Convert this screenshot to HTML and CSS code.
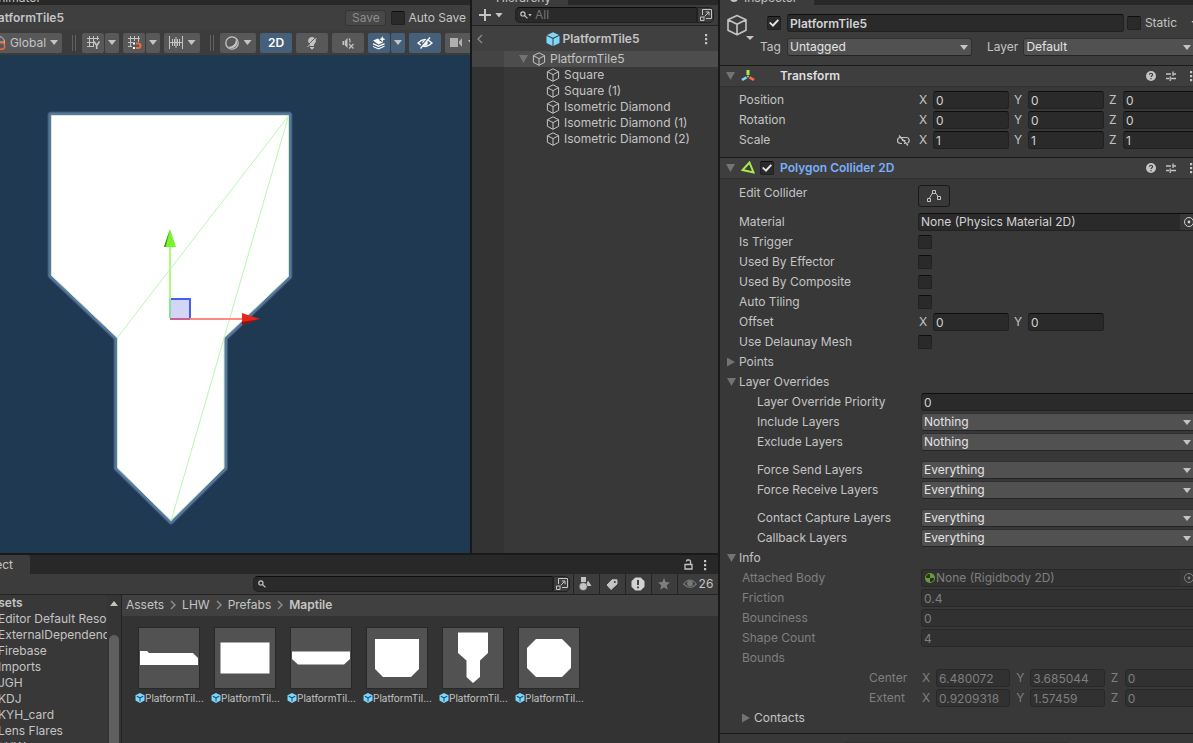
FILE: index.html
```html
<!DOCTYPE html>
<html lang="en">
<head>
<meta charset="utf-8">
<title>PlatformTile5 - Editor</title>
<link rel="stylesheet" href="styles.css">
</head>
<body>
<svg class="defs" aria-hidden="true">
  <symbol id="cube" viewBox="0 0 14 14"><path d="M7 .8 12.6 3.7V10.3L7 13.3 1.4 10.3V3.7ZM1.4 3.7 7 6.6 12.6 3.7M7 6.6V13.3" fill="none" stroke="currentColor" stroke-linejoin="round"/></symbol>
  <symbol id="prefab" viewBox="0 0 14 14"><path d="M7 .2 13 2.9 7 5.8 1 2.9ZM.5 3.8 6.5 6.7V14L.5 11ZM13.5 3.8 7.5 6.7V14L13.5 11Z" fill="#7fd6fd"/></symbol>
  <symbol id="prefab-small" viewBox="0 0 10 10"><path d="M5 0 9.5 2.2V7.6L5 10 .5 7.6V2.2Z" fill="#7fd6fd"/><path d="M1.8 3.2 5 4.8 8.2 3.2M5 4.8V8.6" fill="none" stroke="#23546e" stroke-width="1.1"/></symbol>
  <symbol id="popout" viewBox="0 0 12 12"><path d="M2.5 6V.5H11.5V9.5H6M.5 8H4V11.5H.5ZM4.5 7.5 9 3M5.8 3H9V6.2" fill="none" stroke="currentColor"/></symbol>
  <symbol id="dots" viewBox="0 0 4 12"><path d="M1 1H3.2V3.2H1ZM1 5H3.2V7.2H1ZM1 9H3.2V11.2H1Z" fill="currentColor"/></symbol>
  <symbol id="help" viewBox="0 0 10 10"><circle cx="5" cy="5" r="5" fill="currentColor"/><path d="M3.4 3.8C3.4 1.7 6.6 1.7 6.6 3.8 6.6 4.8 5 4.8 5 6.1M5 7V8.2" fill="none" stroke="#3e3e3e" stroke-width="1.2"/></symbol>
  <symbol id="preset" viewBox="0 0 10 10"><path d="M0 3H5M7 3H10M7 .5V5M0 7.5H3M5 7.5H10M4.2 5.5V10" fill="none" stroke="currentColor" stroke-width="1.3"/></symbol>
  <symbol id="picker" viewBox="0 0 12 12"><circle cx="6" cy="6" r="4.5" fill="none" stroke="currentColor"/><circle cx="6" cy="6" r="1.4" fill="currentColor"/></symbol>
  <symbol id="search" viewBox="0 0 8 8"><path d="M4.6 4.6 7.5 7.4M5 2.9A2.1 2.1 0 1 1 .8 2.9 2.1 2.1 0 0 1 5 2.9Z" fill="none" stroke="currentColor" stroke-width="1.2"/></symbol>
  <symbol id="chevron" viewBox="0 0 6 10"><path d="M1 1 5 5 1 9" fill="none" stroke="currentColor" stroke-width="1.4"/></symbol>
</svg>

<div class="editor">
  <div class="workspace">
    <section class="scene" aria-label="Scene">
      <div class="tabstrip"><span class="scene-tab">Animator</span></div>
      <header class="scene-head">
        <strong class="scene-name"><span>PlatformTile5</span></strong>
        <button class="save" disabled>Save</button>
        <label class="auto-save"><input type="checkbox" class="check"> Auto Save</label>
      </header>
      <div class="tools">
        <button class="tool global"><svg width="14" height="14" viewBox="0 0 14 14"><circle cx="7" cy="6" r="5.5" fill="none" stroke="#c4c4c4"/><path d="M1.5 6H12.5" stroke="#c4c4c4"/><circle cx="9.5" cy="10" r="3.2" fill="#585858" stroke="#f26b3a" stroke-width="1.4"/></svg>Global<i class="tri"></i></button>
        <span class="grip"></span>
        <span class="split"><button class="tool sq" aria-label="Grid"><svg width="15" height="15" viewBox="0 0 15 15"><path d="M3.5 1V12M7.5 1V12M11.5 1V5M1 3.5H13M1 7.5H8M1 11.5H7" fill="none" stroke="currentColor"/><path d="M8 6.5 10.7 10.5V14M13.5 6.5 10.7 10.5" fill="none" stroke="currentColor" stroke-width="1.6"/></svg></button><button class="tool drop" aria-label="Grid options"><i class="tri"></i></button></span>
        <span class="split"><button class="tool sq" aria-label="Snap"><svg width="15" height="15" viewBox="0 0 15 15"><path d="M3.5 1V12M7.5 1V6M11.5 1V7M1 3.5H13M1 7.5H6M1 11.5H5" fill="none" stroke="currentColor"/><path d="M9 8.5H11.2A2.2 2.2 0 0 1 11.2 13H9" fill="none" stroke="#f26b3a" stroke-width="2"/><path d="M6 7.5H8V9.5H6ZM6 12H8V14H6Z" fill="#fff"/></svg></button><button class="tool drop" aria-label="Snap options"><i class="tri"></i></button></span>
        <button class="tool ruler" aria-label="Increment"><svg width="14" height="13" viewBox="0 0 14 13"><path d="M.5 0V13M13.5 0V13M3.5 3V10M5.5 3V10M8.5 3V10M10.5 3V10M7 1V12M0 6.5H14" stroke="currentColor" fill="none"/></svg><i class="tri"></i></button>
        <span class="grip"></span>
        <button class="tool shade" aria-label="Draw mode"><svg width="14" height="14" viewBox="0 0 14 14"><circle cx="7" cy="7" r="6.2" fill="none" stroke="currentColor" stroke-width="1.3"/><path d="M10.5 2.4A5.2 5.2 0 1 1 2.4 10.5 6.6 6.6 0 0 0 10.5 2.4Z" fill="currentColor"/></svg><i class="tri"></i></button>
        <button class="tool wide on">2D</button>
        <button class="tool wide" aria-label="Lighting"><svg width="12" height="14" viewBox="0 0 12 14"><path d="M6 1A3.9 3.9 0 0 1 8 8.2V10H4V8.2A3.9 3.9 0 0 1 6 1ZM4 11H8V12.3H7V13.3H5V12.3H4Z" fill="currentColor"/><path d="M1 10 9.500 1.500" stroke="#585858"/><path d="M1.500 11 10.500 2" stroke="currentColor"/></svg></button>
        <button class="tool wide" aria-label="Audio"><svg width="12" height="12" viewBox="0 0 12 12"><path d="M.5 4V8H2V4ZM2.700 4 5.500 1V11L2.700 8Z" fill="currentColor"/><path d="M7 1.500Q8.500 3 8 5.500M7 7 11.500 11.500M11.500 7 7 11.500" fill="none" stroke="currentColor" stroke-width="1.200"/></svg></button>
        <span class="split"><button class="tool sq on" aria-label="Effects"><svg width="14" height="14" viewBox="0 0 14 14"><path d="M1 4.5 6 2.5 8 5 11 6.5 12 6 6.5 8.5ZM1 7 6.5 9.6 12.5 7V8.6L6.5 11 1 8.6ZM1 10 6.5 12.2 12.5 9.6V10.8L6.5 13.5 1 11Z" fill="currentColor"/><path d="M10.3 0 11.2 2.3 13.5 3.2 11.2 4.1 10.3 6.4 9.4 4.1 7.1 3.2 9.4 2.3Z" fill="currentColor"/></svg></button><button class="tool drop on" aria-label="Effect options"><i class="tri"></i></button></span>
        <button class="tool wide on" aria-label="Visibility"><svg width="16" height="12" viewBox="0 0 16 12"><path d="M1 6Q8-1 15 6 8 13 1 6Z" fill="none" stroke="currentColor" stroke-width="1.3"/><circle cx="8" cy="6" r="2.7" fill="currentColor"/><path d="M2.5 11 12 1" stroke="#46607c" stroke-width="2"/><path d="M3.5 11.5 13 .5" stroke="currentColor" stroke-width="1.3"/></svg></button>
        <button class="tool camera" aria-label="Camera"><svg width="13" height="9" viewBox="0 0 13 9"><path d="M0 0H8V9H0ZM9 3.5 12 0V9L9 5.5Z" fill="#b0b0b0"/></svg><i class="tri"></i></button>
      </div>
      <div class="viewport">
        <svg class="canvas" viewBox="0 55 470 498" preserveAspectRatio="xMinYMin meet" role="img" aria-label="PlatformTile5">
          <path d="M51 115H289V276.500L224.500 338V468L171 521 117 468V338L51 275.500Z" fill="none" stroke="#3b557b" stroke-width="7" stroke-linejoin="round"/>
          <path d="M51 115H289V276.500L224.500 338V468L171 521 117 468V338L51 275.500Z" fill="#fff" stroke="#5c759f" stroke-width="5" stroke-linejoin="round"/>
          <path d="M51.500 115.500H288.500V276.500L224 338V468L171 520.500 117.500 468V338L51.500 275.500Z" fill="#fff" stroke="#c6f5c6"/>
          <path d="M288.500 116 117 338M288.500 116 171 521" fill="none" stroke="#b9f6b4"/>
          <path d="M170 299H190V319H170Z" fill="#d2d5f8"/>
          <path d="M170 299H190V319" fill="none" stroke="#4660ed" stroke-width="2"/>
          <path d="M170 319H242" stroke="#ff8a80" stroke-width="2"/>
          <path d="M170 319H190" stroke="#c8628c" stroke-width="2"/>
          <path d="M170 318V246" stroke="#b0fb7b" stroke-width="2"/>
          <path d="M170 318V299" stroke="#86e592" stroke-width="2"/>
          <path d="M170 229 176 247H164Z" fill="#76f52b"/><path d="M170 229 165.500 247H164Z" fill="#3c7d18"/>
          <path d="M260 319 242 313V325Z" fill="#e4261c"/><path d="M260 319 242 322V325Z" fill="#8d120f"/>
        </svg>
      </div>
    </section>

    <section class="hierarchy" aria-label="Hierarchy">
      <div class="tabstrip"><span class="tab hier-tab">Hierarchy</span></div>
      <div class="hier-tools">
        <button class="plain add" aria-label="Create"><svg width="12" height="12" viewBox="0 0 12 12"><path d="M6 0V12M0 6H12" stroke="currentColor" stroke-width="2"/></svg><i class="tri"></i></button>
        <label class="searchbox"><svg width="8" height="8"><use href="#search"/></svg><i class="tri tiny"></i><input type="text" placeholder="All" aria-label="Search hierarchy"></label>
        <button class="popout" aria-label="Open search"><svg width="12" height="12"><use href="#popout"/></svg></button>
      </div>
      <div class="stage">
        <button class="plain back" aria-label="Back"><svg width="6" height="10" viewBox="0 0 6 10"><path d="M5 1 1 5 5 9" fill="none" stroke="currentColor" stroke-width="1.2"/></svg></button>
        <strong><svg width="14" height="14"><use href="#prefab"/></svg>PlatformTile5</strong>
        <button class="plain more" aria-label="More"><svg width="4" height="12"><use href="#dots"/></svg></button>
      </div>
      <ul class="nodes">
        <li class="root"><i class="tri fold"></i><svg width="14" height="14"><use href="#cube"/></svg>PlatformTile5</li>
        <li><svg width="14" height="14"><use href="#cube"/></svg>Square</li>
        <li><svg width="14" height="14"><use href="#cube"/></svg>Square (1)</li>
        <li><svg width="14" height="14"><use href="#cube"/></svg>Isometric Diamond</li>
        <li><svg width="14" height="14"><use href="#cube"/></svg>Isometric Diamond (1)</li>
        <li><svg width="14" height="14"><use href="#cube"/></svg>Isometric Diamond (2)</li>
      </ul>
    </section>

    <section class="project" aria-label="Project">
      <div class="project-tabs">
        <span class="project-tab"><span>Project</span></span>
        <button class="plain lock" aria-label="Lock"><svg width="9" height="11" viewBox="0 0 9 11"><path d="M1 5.500H8V10H1ZM6.500 5V2.500Q6.500 1 5 1H3.500Q2.500 1 2.500 2.500" fill="none" stroke="currentColor" stroke-width="1.300"/></svg></button>
        <button class="plain" aria-label="More"><svg width="4" height="12"><use href="#dots"/></svg></button>
      </div>
      <div class="project-tools">
        <label class="searchbox"><svg width="8" height="8"><use href="#search"/></svg><input type="text" aria-label="Search project"></label>
        <button class="popout" aria-label="Open search"><svg width="12" height="12"><use href="#popout"/></svg></button>
        <button class="filter first" aria-label="Filter by type"><svg width="13" height="14" viewBox="0 0 13 14"><path d="M2 0H7V5H2ZM9 3.500 12.500 9H6.500Z" fill="currentColor"/><circle cx="4.200" cy="9.500" r="4" fill="currentColor" stroke="#3c3c3c" stroke-width=".6"/></svg></button>
        <button class="filter" aria-label="Filter by label"><svg width="12" height="11" viewBox="0 0 12 11"><path d="M6 .8H11V5L5 10.500 1 6Z" fill="currentColor" stroke="currentColor" stroke-linejoin="round"/><circle cx="8.800" cy="3" r="1" fill="#3c3c3c"/></svg></button>
        <button class="filter" aria-label="Filter by import log"><svg width="14" height="14" viewBox="0 0 14 14"><path d="M4.300 .5H9.700L13.500 4.300V9.700L9.700 13.500H4.300L.5 9.700V4.300Z" fill="#d2d2d2"/><path d="M7 3V8M7 9.500V11.300" stroke="#333" stroke-width="1.800"/></svg></button>
        <button class="filter dim" aria-label="Favorites"><svg width="12" height="12" viewBox="0 0 12 12"><path d="M6 0 7.700 4.100 12 4.500 8.700 7.300 9.700 11.700 6 9.300 2.300 11.700 3.300 7.300 0 4.500 4.300 4.100Z" fill="currentColor"/></svg></button>
        <button class="filter hidden-count"><svg width="14" height="10" viewBox="0 0 14 10"><path d="M.7 5Q7-3 13.300 5 7 12 .7 5Z" fill="none" stroke="#777" stroke-width="1.200"/><circle cx="7" cy="4.500" r="2.900" fill="#777"/></svg>26</button>
      </div>
      <div class="project-body">
        <ul class="folders">
          <li class="top">Assets</li><li>Editor Default Resources</li><li>ExternalDependencyManager</li><li>Firebase</li><li>Imports</li><li>JGH</li><li>KDJ</li><li>KYH_card</li><li>Lens Flares</li><li>LHW</li>
        </ul>
        <div class="scroll"><i class="tri up"></i><span></span></div>
        <div class="assets">
          <nav class="crumbs"><a href="#">Assets</a><svg width="6" height="10"><use href="#chevron"/></svg><a href="#">LHW</a><svg width="6" height="10"><use href="#chevron"/></svg><a href="#">Prefabs</a><svg width="6" height="10"><use href="#chevron"/></svg><strong>Maptile</strong></nav>
          <div class="grid">
            <figure><svg class="thumb" viewBox="0 0 60 60"><path d="M1 23H8L10 25H54L59 30V37H1Z"/></svg><figcaption><svg width="10" height="10"><use href="#prefab-small"/></svg>PlatformTil...</figcaption></figure>
            <figure><svg class="thumb" viewBox="0 0 60 60"><path d="M5.500 14.500H54.500V45.500H5.500Z"/></svg><figcaption><svg width="10" height="10"><use href="#prefab-small"/></svg>PlatformTil...</figcaption></figure>
            <figure><svg class="thumb" viewBox="0 0 60 60"><path d="M1 23.500H59V31L53 36.500H7L1 31Z"/></svg><figcaption><svg width="10" height="10"><use href="#prefab-small"/></svg>PlatformTil...</figcaption></figure>
            <figure><svg class="thumb" viewBox="0 0 60 60"><path d="M8 11H52V41L44 49H16L8 41Z"/></svg><figcaption><svg width="10" height="10"><use href="#prefab-small"/></svg>PlatformTil...</figcaption></figure>
            <figure><svg class="thumb" viewBox="0 0 60 60"><path d="M15 4.500H45V25L37 32.500V49L30 55 23.500 49V32.500L15 25Z"/></svg><figcaption><svg width="10" height="10"><use href="#prefab-small"/></svg>PlatformTil...</figcaption></figure>
            <figure><svg class="thumb" viewBox="0 0 60 60"><path d="M17 11H43L52 20V40L43 49H17L8 40V20Z"/></svg><figcaption><svg width="10" height="10"><use href="#prefab-small"/></svg>PlatformTil...</figcaption></figure>
          </div>
        </div>
      </div>
    </section>
  </div>

  <section class="inspector" aria-label="Inspector">
    <div class="tabstrip"><span class="tab insp-tab"><i class="info-dot"></i>Inspector</span></div>
    <div class="insp-body">
      <header class="object">
        <button class="plain object-icon" aria-label="Icon"><svg width="22" height="22" viewBox="0 0 22 22"><path d="M11 1.500 20 5.800V16.300L11 20.800 2 16.300V5.800ZM2 5.800 11 10.300 20 5.800M11 10.300V20.800" fill="none" stroke="#c4c4c4" stroke-width="1.600" stroke-linejoin="round"/></svg><i class="tri small"></i></button>
        <div class="object-rows">
          <div class="object-row">
            <input type="checkbox" class="check" checked aria-label="Active">
            <input type="text" class="field name" value="PlatformTile5" aria-label="Name">
            <label class="static"><input type="checkbox" class="check"> Static</label><i class="tri"></i>
          </div>
          <div class="object-row second">
            <label for="tag" class="tag-label">Tag</label><span class="select tag"><select id="tag"><option>Untagged</option></select></span>
            <label for="layer" class="layer-label">Layer</label><span class="select"><select id="layer"><option>Default</option></select></span>
          </div>
        </div>
      </header>

      <h2 class="comp"><i class="tri fold"></i><svg width="14" height="14" viewBox="0 0 14 14"><path d="M7 1V6" stroke="#a6ee47" stroke-width="3"/><path d="M5.500 8.300 1 11" stroke="#7fd6fd" stroke-width="2.600"/><path d="M8.500 8.300 13 11" stroke="#ff6e40" stroke-width="2.600"/><circle cx="7" cy="7.500" r="1" fill="#c4c4c4"/></svg><span class="no-check"></span><span class="comp-name">Transform</span><svg width="10" height="10"><use href="#help"/></svg><svg width="10" height="10"><use href="#preset"/></svg><svg class="kebab" width="4" height="12"><use href="#dots"/></svg></h2>
      <div class="props transform">
        <div class="row"><span>Position</span><div class="vec"><label>X<input class="field" value="0"></label><label>Y<input class="field" value="0"></label><label>Z<input class="field" value="0"></label></div></div>
        <div class="row"><span>Rotation</span><div class="vec"><label>X<input class="field" value="0"></label><label>Y<input class="field" value="0"></label><label>Z<input class="field" value="0"></label></div></div>
        <div class="row"><span class="scale">Scale<svg width="13" height="11" viewBox="0 0 13 11"><path d="M5 8.500H3.500A3 3 0 0 1 3.500 2.500H9.500A3 3 0 0 1 10.500 8.200M7 8.500H8M5 5.500H8.500M2 .5 11 10.500" fill="none" stroke="currentColor" stroke-width="1.200"/></svg></span><div class="vec"><label>X<input class="field" value="1"></label><label>Y<input class="field" value="1"></label><label>Z<input class="field" value="1"></label></div></div>
      </div>

      <h2 class="comp"><i class="tri fold"></i><svg width="14" height="14" viewBox="0 0 14 14"><path d="M8.500 1.500 12.500 11.500 1.500 9Z" fill="none" stroke="#a6ee47" stroke-width="2"/></svg><input type="checkbox" class="check" checked aria-label="Enabled"><span class="comp-name link">Polygon Collider 2D</span><svg width="10" height="10"><use href="#help"/></svg><svg width="10" height="10"><use href="#preset"/></svg><svg class="kebab" width="4" height="12"><use href="#dots"/></svg></h2>
      <div class="props collider">
        <div class="row edit"><span>Edit Collider</span><button class="edit-btn" aria-label="Edit Collider"><svg width="14" height="12" viewBox="0 0 14 12"><path d="M2.500 8 5.500 3M8.500 3 11.500 7M.5 8.500H3.500V11.500H.5ZM5.500 .5H8.500V3.500H5.500ZM10.500 6.500H13.500V9.500H10.500Z" fill="none" stroke="currentColor"/></svg></button></div>
        <div class="row"><span>Material</span><div class="field object-field">None (Physics Material 2D)<button class="pick" aria-label="Pick material"><svg width="12" height="12"><use href="#picker"/></svg></button></div></div>
        <div class="row"><label for="c1">Is Trigger</label><input id="c1" type="checkbox" class="check"></div>
        <div class="row"><label for="c2">Used By Effector</label><input id="c2" type="checkbox" class="check"></div>
        <div class="row"><label for="c3">Used By Composite</label><input id="c3" type="checkbox" class="check"></div>
        <div class="row"><label for="c4">Auto Tiling</label><input id="c4" type="checkbox" class="check"></div>
        <div class="row"><span>Offset</span><div class="vec"><label>X<input class="field" value="0"></label><label>Y<input class="field" value="0"></label><span></span></div></div>
        <div class="row"><label for="c5">Use Delaunay Mesh</label><input id="c5" type="checkbox" class="check"></div>
        <div class="foldout"><i class="tri fold right"></i>Points</div>
        <div class="foldout"><i class="tri fold"></i>Layer Overrides</div>
        <div class="nested">
          <div class="row"><label for="prio">Layer Override Priority</label><input id="prio" class="field" value="0"></div>
          <div class="row"><label for="s1">Include Layers</label><span class="select"><select id="s1"><option>Nothing</option></select></span></div>
          <div class="row"><label for="s2">Exclude Layers</label><span class="select"><select id="s2"><option>Nothing</option></select></span></div>
          <div class="row spaced"><label for="s3">Force Send Layers</label><span class="select"><select id="s3"><option>Everything</option></select></span></div>
          <div class="row"><label for="s4">Force Receive Layers</label><span class="select"><select id="s4"><option>Everything</option></select></span></div>
          <div class="row spaced"><label for="s5">Contact Capture Layers</label><span class="select"><select id="s5"><option>Everything</option></select></span></div>
          <div class="row"><label for="s6">Callback Layers</label><span class="select"><select id="s6"><option>Everything</option></select></span></div>
        </div>
        <div class="foldout"><i class="tri fold"></i>Info</div>
        <div class="nested info">
          <div class="row"><span>Attached Body</span><div class="field object-field"><svg width="12" height="12" viewBox="0 0 12 12"><circle cx="6" cy="6" r="5" fill="#6c9a3e"/><path d="M6 2V6H2A4 4 0 0 1 6 2ZM6 10V6H10A4 4 0 0 1 6 10Z" fill="#263314"/></svg>None (Rigidbody 2D)<button class="pick" disabled aria-label="Pick body"><svg width="12" height="12"><use href="#picker"/></svg></button></div></div>
          <div class="row"><label for="i1">Friction</label><input id="i1" class="field" value="0.4" disabled></div>
          <div class="row"><label for="i2">Bounciness</label><input id="i2" class="field" value="0" disabled></div>
          <div class="row"><label for="i3">Shape Count</label><input id="i3" class="field" value="4" disabled></div>
          <div class="row"><span>Bounds</span></div>
          <div class="row"><span class="sub">Center</span><div class="vec"><label>X<input class="field" value="6.480072" disabled></label><label>Y<input class="field" value="3.685044" disabled></label><label>Z<input class="field" value="0" disabled></label></div></div>
          <div class="row"><span class="sub">Extent</span><div class="vec"><label>X<input class="field" value="0.9209318" disabled></label><label>Y<input class="field" value="1.57459" disabled></label><label>Z<input class="field" value="0" disabled></label></div></div>
        </div>
        <div class="foldout inner"><i class="tri fold right"></i>Contacts</div>
      </div>
      <div class="insp-end"><button class="add-component" aria-label="Add Component"></button></div>
    </div>
  </section>
</div>
</body>
</html>
```
FILE: styles.css
```css
* { box-sizing: border-box; }

body {
  margin: 0;
  background: #191919;
  color: #c4c4c4;
  font: 12px/16px Inter, "Liberation Sans", sans-serif;
}

svg { display: block; flex: none; }
ul, figure, h2 { margin: 0; padding: 0; list-style: none; }
button, input, select { font: inherit; color: inherit; margin: 0; }
input { min-width: 0; }
a { color: inherit; text-decoration: none; }
.defs { position: absolute; width: 0; height: 0; }

.editor {
  display: grid;
  grid-template-columns: 718fr 473fr;
  gap: 2px;
  height: 100vh;
  overflow: hidden;
}

.workspace {
  display: grid;
  grid-template-columns: minmax(0, 1fr) 246px;
  grid-template-rows: minmax(0, 1fr) 188px;
  gap: 2px;
  min-width: 0;
}

/* Shared pieces */

.tabstrip {
  display: flex;
  align-items: flex-end;
  height: 5px;
  background: #282828;
  overflow: hidden;
}
.tab { display: flex; align-items: center; gap: 6px; background: #3c3c3c; line-height: 14px; }

.plain {
  display: flex;
  align-items: center;
  padding: 0;
  border: 0;
  background: none;
}

.tri {
  flex: none;
  width: 8px;
  height: 5px;
  background: #c4c4c4;
  clip-path: polygon(0 0, 100% 0, 50% 100%);
}
.tri.tiny { width: 4px; height: 3px; }
.tri.small { width: 8px; height: 4px; }
.tri.up { clip-path: polygon(50% 0, 100% 100%, 0 100%); }
.tri.fold { width: 9px; height: 8px; background: #737373; }
.tri.right { width: 8px; height: 9px; clip-path: polygon(0 0, 100% 50%, 0 100%); }

.check {
  display: grid;
  place-items: center;
  flex: none;
  appearance: none;
  width: 14px;
  height: 14px;
  border: 1px solid #212121;
  border-top-color: #0d0d0d;
  border-radius: 2px;
  background: #2a2a2a;
}
.check:checked::before {
  content: "";
  width: 10px;
  height: 8px;
  background: #e6e6e6;
  clip-path: polygon(0 50%, 13% 36%, 38% 66%, 86% 4%, 100% 18%, 40% 100%);
}

.field {
  width: 100%;
  height: 18px;
  padding: 0 2px;
  border: 1px solid #212121;
  border-top-color: #0d0d0d;
  border-radius: 3px;
  background: #2a2a2a;
  color: #d2d2d2;
}

.select { position: relative; display: block; width: 100%; min-width: 0; }
.select::after {
  content: "";
  position: absolute;
  top: 7px;
  right: 8px;
  width: 8px;
  height: 5px;
  background: #c4c4c4;
  clip-path: polygon(0 0, 100% 0, 50% 100%);
}
.select select {
  display: block;
  appearance: none;
  width: 100%;
  height: 18px;
  padding: 0 16px 1px 2px;
  border: 1px solid #303030;
  border-bottom-color: #242424;
  border-radius: 3px;
  background: #515151;
  color: #e4e4e4;
}

.searchbox {
  display: flex;
  align-items: center;
  flex: 1;
  min-width: 0;
  height: 16px;
  padding-left: 4px;
  border: 1px solid #212121;
  border-top-color: #0d0d0d;
  border-radius: 5px 0 0 5px;
  background: #2a2a2a;
}
.searchbox input { flex: 1; height: 14px; padding: 0; border: 0; outline: 0; background: none; }
.searchbox input::placeholder { color: #757575; }

.popout {
  display: grid;
  place-items: center;
  width: 17px;
  height: 16px;
  padding: 0;
  border: 1px solid #212121;
  border-radius: 0 5px 5px 0;
  background: #3c3c3c;
}

/* Scene */

.scene { display: flex; flex-direction: column; min-width: 0; background: #3c3c3c; overflow: hidden; }
.scene-tab { margin-left: -10px; line-height: 14px; }

.scene-head {
  display: flex;
  align-items: center;
  height: 25px;
  padding-right: 4px;
  background: #3f3f3f;
}
.scene-name {
  display: flex;
  justify-content: flex-end;
  width: 64px;
  margin-right: auto;
  overflow: hidden;
  font-weight: 600;
}
.save {
  width: 41px;
  height: 16px;
  margin-right: 5px;
  padding: 0;
  border: 1px solid #353535;
  border-radius: 3px;
  background: #484848;
  color: #8c8c8c;
  line-height: 14px;
}
.auto-save { display: flex; align-items: center; gap: 3px; }

.tools {
  display: flex;
  align-items: center;
  gap: 4px;
  height: 25px;
  overflow: hidden;
}
.tool {
  display: flex;
  align-items: center;
  justify-content: center;
  flex: none;
  height: 20px;
  padding: 0;
  border: 0;
  border-radius: 2px;
  background: #585858;
}
.tool.on { background: #46607c; color: #fff; font-weight: 600; }
.global { gap: 4px; width: 74px; margin-left: -12px; }
.sq { width: 22px; }
.drop { width: 14px; }
.ruler { gap: 5px; width: 36px; }
.shade { gap: 5px; width: 36px; }
.wide { width: 32px; }
.camera { gap: 5px; width: 36px; }
.split { display: flex; flex: none; gap: 1px; }
.grip { flex: none; width: 4px; height: 16px; margin: 0 2px 0 6px; border: solid #606060; border-width: 0 1px; }

.viewport { flex: 1; min-height: 0; background: #203952; }
.canvas { width: 100%; height: 100%; }

/* Hierarchy */

.hierarchy { display: flex; flex-direction: column; min-width: 0; background: #383838; }
.hier-tab { width: 96px; padding-left: 24px; }
.hier-tools {
  display: flex;
  align-items: center;
  height: 21px;
  padding-right: 4px;
  border-bottom: 1px solid #232323;
  background: #3c3c3c;
}
.add { gap: 4px; width: 43px; padding-left: 7px; }
.hier-tools .searchbox input { margin-left: 3px; }

.stage {
  display: grid;
  grid-template-columns: 20px 1fr 24px;
  align-items: center;
  height: 25px;
  background: #404040;
}
.back { padding-left: 5px; color: #8f8f8f; }
.stage strong { display: flex; align-items: center; justify-content: center; gap: 2px; font-weight: 600; }
.more { justify-content: center; }

.nodes { flex: 1; background: linear-gradient(90deg, #333 32px, #383838 32px); }
.nodes li { display: flex; align-items: center; gap: 4px; height: 16px; padding-left: 74px; }
.nodes .root { padding-left: 47px; background: linear-gradient(90deg, #444 32px, #4d4d4d 32px); }

/* Project */

.project { grid-column: 1 / -1; display: flex; flex-direction: column; min-width: 0; background: #333; }
.project-tabs { display: flex; align-items: center; gap: 10px; height: 19px; padding-right: 11px; background: #282828; }
.project-tab {
  display: flex;
  align-items: center;
  justify-content: flex-end;
  width: 30px;
  height: 19px;
  margin-right: auto;
  padding-right: 17px;
  border-radius: 0 3px 0 0;
  background: #3c3c3c;
  line-height: 22px;
}
.project-tools {
  display: flex;
  align-items: center;
  height: 21px;
  padding-left: 253px;
  border-bottom: 1px solid #232323;
  background: #3c3c3c;
}
.filter {
  display: flex;
  align-items: center;
  justify-content: center;
  width: 26px;
  height: 20px;
  padding: 0 2px 0 0;
  border: 0;
  border-left: 1px solid #232323;
  background: none;
}
.filter.first { margin-left: 3px; }
.filter.dim { color: #7f7f7f; }
.hidden-count { gap: 2px; width: 41px; padding: 0; }

.project-body { display: flex; flex: 1; min-height: 0; overflow: hidden; }
.folders { width: 107px; overflow: hidden; background: #383838; white-space: nowrap; }
.folders li { margin-left: -2px; }
.folders .top { margin-left: -17px; font-weight: 600; }
.scroll {
  display: flex;
  flex-direction: column;
  align-items: center;
  gap: 29px;
  width: 15px;
  padding-top: 6px;
  border-right: 1px solid #232323;
  background: #353535;
}
.scroll span { flex: 1; width: 10px; border-radius: 5px 5px 0 0; background: #5f5f5f; }
.assets { flex: 1; min-width: 0; }
.crumbs { display: flex; align-items: center; gap: 6px; height: 21px; padding: 0 0 2px 4px; background: #404040; }
.crumbs svg { color: #8f8f8f; }
.crumbs strong { font-weight: 600; }
.grid { display: flex; flex-wrap: wrap; padding: 12px 9px; }
.grid figure { width: 76px; }
.thumb { width: 60px; height: 60px; margin: 0 8px 2px; background: #525252; fill: #fff; outline: 1px solid #282828; }
.grid figcaption { display: flex; align-items: center; padding-left: 4px; font-size: 10px; white-space: nowrap; }

/* Inspector */

.inspector { min-width: 0; overflow: hidden; background: #383838; }
.insp-tab { width: 94px; padding-left: 10px; }
.info-dot { width: 8px; height: 8px; border-radius: 4px; background: #c4c4c4; }
.insp-body { margin-right: -8px; }

.object { display: flex; height: 60px; padding: 9px 2px 0 6px; background: #3c3c3c; }
.object-icon { flex-direction: column; align-items: flex-end; flex: none; width: 41px; padding-right: 13px; }
.object-icon svg { margin-right: 6px; }
.object-rows { flex: 1; min-width: 0; }
.object-row { display: flex; align-items: center; }
.object-row.second { margin-top: 6px; }
.name { flex: 1; margin: 0 3px 0 6px; font-weight: 600; }
.static { display: flex; align-items: center; gap: 4px; margin-right: 14px; }
.tag-label { flex: none; width: 20px; margin-left: -7px; margin-right: 7px; }
.select.tag { flex: 0 0 185px; }
.select.tag::after { right: 4px; }
.layer-label { margin: 0 5px 0 15px; }
.object-row .select:last-child { flex: 1; }

.comp {
  display: flex;
  align-items: center;
  height: 22px;
  padding: 0 8px 0 6px;
  border-top: 1px solid #1a1a1a;
  border-bottom: 1px solid #303030;
  background: #3e3e3e;
  font-size: 12px;
  font-weight: 600;
}
.comp > svg { margin-left: 6px; }
.comp .check, .no-check { width: 14px; margin: 0 6px 0 5px; }
.comp-name { flex: 1; color: #dedede; }
.comp-name.link { color: #7baefa; }
.comp-name ~ svg { margin-left: 10px; }
.comp-name ~ .kebab { margin-left: 13px; }

.props { display: grid; gap: 2px; padding-right: 2px; }
.transform { padding-top: 4px; padding-bottom: 8px; }
.collider { padding-top: 6px; padding-bottom: 6px; }
.row {
  display: grid;
  grid-template-columns: 179px minmax(0, 1fr);
  align-items: center;
  min-height: 18px;
  padding-left: 19px;
}
.edit { align-items: start; margin-bottom: 4px; }
.scale { display: flex; align-items: center; justify-content: space-between; padding-right: 8px; }
.edit-btn {
  display: grid;
  place-items: center;
  width: 32px;
  height: 22px;
  padding: 0;
  border: 1px solid #191919;
  border-radius: 3px;
  background: #383838;
}
.vec { display: grid; grid-template-columns: repeat(3, minmax(0, 1fr)); gap: 5px; padding-left: 1px; }
.vec label { display: grid; grid-template-columns: 14px minmax(0, 1fr); align-items: center; }

.object-field { display: flex; align-items: center; padding-right: 0; }
.pick {
  width: 18px;
  height: 16px;
  margin-left: auto;
  padding: 0 3px;
  border: 0;
  background: #373737;
}

.foldout { display: flex; align-items: center; gap: 3px; height: 18px; padding-left: 7px; }
.foldout .right { margin-right: 1px; }
.foldout.inner { padding-left: 22px; }
.nested { display: grid; gap: 2px; }
.nested .row { grid-template-columns: 164px minmax(0, 1fr); padding-left: 37px; }
.spaced { margin-top: 8px; }

.info .row { grid-template-columns: 179px minmax(0, 1fr); padding-left: 22px; color: #7f7f7f; }
.info .field { border-color: #282828; background: #313131; color: #7f7f7f; }
.info .vec { gap: 6px; }
.info .pick { background: #353535; color: #7f7f7f; }
.sub { padding-left: 127px; }

.insp-end { display: flex; justify-content: center; height: 40px; padding: 8px 8px 0 0; border-top: 1px solid #1a1a1a; }
.add-component { width: 228px; height: 24px; border: 1px solid #303030; border-radius: 3px; background: #585858; }
```
